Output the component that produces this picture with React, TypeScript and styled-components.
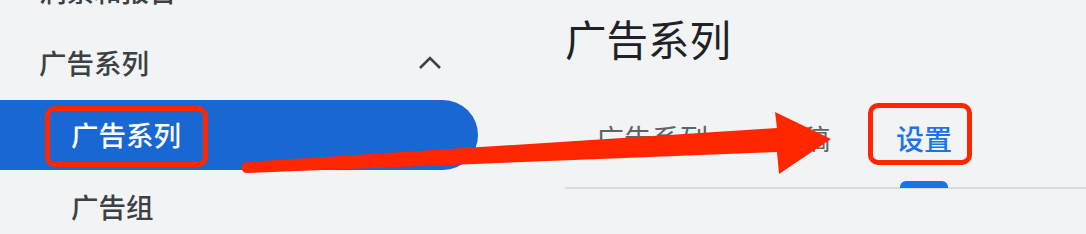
import React from 'react'
import styled, { createGlobalStyle } from 'styled-components'

const GlobalStyle = createGlobalStyle`
  html, body {
    margin: 0;
    padding: 0;
    background: #f1f3f4;
    overflow: hidden;
  }
  body {
    font-family: 'Noto Sans CJK SC', 'Noto Sans', sans-serif;
  }
`

const Page = styled.div`
  position: relative;
  width: 1086px;
  height: 234px;
  display: grid;
  grid-template-columns: 478px 1fr;
  overflow: hidden;
`

const Nav = styled.nav`
  display: flex;
  flex-direction: column;
  margin-top: -45px;
`

const NavRow = styled.div<{ $indent?: boolean; $active?: boolean }>`
  position: relative;
  display: flex;
  align-items: center;
  justify-content: space-between;
  height: ${(p) => (p.$active ? '70px' : '72px')};
  margin: ${(p) => (p.$active ? '1px 0' : '0')};
  padding-left: ${(p) => (p.$indent ? '71px' : '39px')};
  padding-right: 36px;
  font-size: 27.5px;
  line-height: 1;
  font-weight: 500;
  color: ${(p) => (p.$active ? '#ffffff' : '#3c4043')};
  background: ${(p) => (p.$active ? '#1967d2' : 'transparent')};
  border-radius: 0 35px 35px 0;
`

const Chevron = styled.svg`
  width: 24px;
  height: 14px;
  color: #3c4043;
`

const NavMark = styled.div`
  position: absolute;
  left: 45px;
  top: 6px;
  width: 163px;
  height: 61px;
  box-sizing: border-box;
  border: 5px solid #ff2600;
  border-radius: 10px;
`

const Main = styled.main`
  display: flex;
  flex-direction: column;
  padding-left: 87px;
`

const Title = styled.h1`
  margin: 10px 0 0;
  font-size: 41.5px;
  line-height: 56px;
  font-weight: 400;
  color: #202124;
`

const TabBar = styled.div`
  display: flex;
  align-items: stretch;
  gap: 4px;
  height: 99px;
  margin-top: 22px;
  border-bottom: 2px solid #dadce0;
`

const Tab = styled.div<{ $active?: boolean }>`
  position: relative;
  display: flex;
  align-items: center;
  padding: 0 31px;
  font-size: 28px;
  line-height: 1;
  font-weight: ${(p) => (p.$active ? 500 : 400)};
  color: ${(p) => (p.$active ? '#1a73e8' : '#5f6368')};
`

const TabLabel = styled.span`
  position: relative;
`

const Indicator = styled.div`
  position: absolute;
  left: 50%;
  bottom: -1px;
  width: 48px;
  height: 7px;
  margin-left: -24px;
  background: #1a73e8;
  border-radius: 6px 6px 0 0;
`

const TabMark = styled.div`
  position: absolute;
  left: -28px;
  right: -20px;
  top: -21px;
  bottom: -13px;
  border: 5px solid #ff2600;
  border-radius: 10px;
`

const ArrowLayer = styled.svg`
  position: absolute;
  left: 0;
  top: 0;
  width: 1086px;
  height: 234px;
  pointer-events: none;
`

const App: React.FC = () => {
  return (
    <>
      <GlobalStyle />
      <Page>
        <Nav>
          <NavRow>洞察和报告</NavRow>
          <NavRow>
            广告系列
            <Chevron viewBox="0 0 24 14">
              <polyline points="2,12 12,2 22,12" fill="none" stroke="currentColor" strokeWidth="2.6" />
            </Chevron>
          </NavRow>
          <NavRow $indent $active>
            广告系列
            <NavMark />
          </NavRow>
          <NavRow $indent>广告组</NavRow>
        </Nav>
        <Main>
          <Title>广告系列</Title>
          <TabBar>
            <Tab>广告系列</Tab>
            <Tab>草稿</Tab>
            <Tab $active>
              <TabLabel>
                设置
                <TabMark />
              </TabLabel>
              <Indicator />
            </Tab>
          </TabBar>
        </Main>
        <ArrowLayer viewBox="0 0 1086 234">
          <polygon
            points="247,162 777,128 775,112 831,139 779,174 777,152 247,173"
            fill="#ff2600"
          />
          <circle cx="247" cy="167.5" r="5.5" fill="#ff2600" />
        </ArrowLayer>
      </Page>
    </>
  )
}

export default App
